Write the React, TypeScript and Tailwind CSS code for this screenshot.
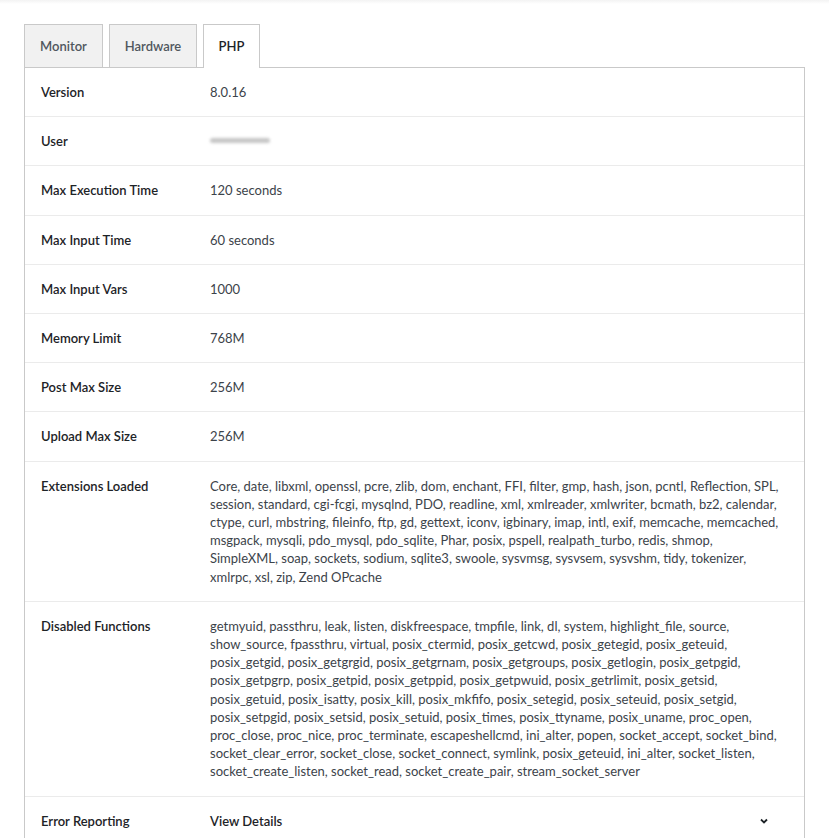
import React from "react";

const ext = [
  "Core, date, libxml, openssl, pcre, zlib, dom, enchant, FFI, filter, gmp, hash, json, pcntl, Reflection, SPL,",
  "session, standard, cgi-fcgi, mysqlnd, PDO, readline, xml, xmlreader, xmlwriter, bcmath, bz2, calendar,",
  "ctype, curl, mbstring, fileinfo, ftp, gd, gettext, iconv, igbinary, imap, intl, exif, memcache, memcached,",
  "msgpack, mysqli, pdo_mysql, pdo_sqlite, Phar, posix, pspell, realpath_turbo, redis, shmop,",
  "SimpleXML, soap, sockets, sodium, sqlite3, swoole, sysvmsg, sysvsem, sysvshm, tidy, tokenizer,",
  "xmlrpc, xsl, zip, Zend OPcache",
];

const dis = [
  "getmyuid, passthru, leak, listen, diskfreespace, tmpfile, link, dl, system, highlight_file, source,",
  "show_source, fpassthru, virtual, posix_ctermid, posix_getcwd, posix_getegid, posix_geteuid,",
  "posix_getgid, posix_getgrgid, posix_getgrnam, posix_getgroups, posix_getlogin, posix_getpgid,",
  "posix_getpgrp, posix_getpid, posix_getppid, posix_getpwuid, posix_getrlimit, posix_getsid,",
  "posix_getuid, posix_isatty, posix_kill, posix_mkfifo, posix_setegid, posix_seteuid, posix_setgid,",
  "posix_setpgid, posix_setsid, posix_setuid, posix_times, posix_ttyname, posix_uname, proc_open,",
  "proc_close, proc_nice, proc_terminate, escapeshellcmd, ini_alter, popen, socket_accept, socket_bind,",
  "socket_clear_error, socket_close, socket_connect, symlink, posix_geteuid, ini_alter, socket_listen,",
  "socket_create_listen, socket_read, socket_create_pair, stream_socket_server",
];

function Row({ label, children, last }: { label: string; children: React.ReactNode; last?: boolean }) {
  return (
    <div className={`grid grid-cols-[185px_1fr] ${last ? "" : "border-b border-[#ebebeb]"}`}>
      <div className="pl-4 py-[15px] font-semibold text-[#1d2327]">{label}</div>
      <div className="py-[15px] pr-4 text-[#3c434a]">{children}</div>
    </div>
  );
}

function Lines({ lines }: { lines: string[] }) {
  return (
    <div>
      {lines.map((l, i) => (
        <div key={i} className="whitespace-nowrap">{l}</div>
      ))}
    </div>
  );
}

export default function App() {
  return (
    <div
      className="relative w-[829px] h-[838px] overflow-hidden bg-white text-[13px] leading-[18.2px]"
      style={{ fontFamily: 'Lato, "Noto Sans", sans-serif' }}
    >
      <div className="absolute top-0 left-0 right-0 h-[4px] bg-gradient-to-b from-[#f3f3f3] to-white" />
      <div className="pt-[24px] pl-[24px] w-[805px]">
        <div className="flex items-end gap-[6px] h-[43px]">
          <div className="h-[43px] w-[79px] flex items-center justify-center bg-[#f1f1f1] border border-[#c9c9c9] border-b-0 font-semibold text-[#50575e]">
            Monitor
          </div>
          <div className="h-[43px] w-[88px] flex items-center justify-center bg-[#f1f1f1] border border-[#c9c9c9] border-b-0 font-semibold text-[#50575e]">
            Hardware
          </div>
          <div className="relative z-10 h-[44px] mb-[-1px] w-[57px] flex items-center justify-center bg-white border border-[#c9c9c9] border-b-0 font-semibold text-[#1d2327]">
            PHP
          </div>
        </div>
        <div className="border border-[#c9c9c9] border-b-0 bg-white">
          <Row label="Version">8.0.16</Row>
          <Row label="User">
            <div className="h-[18px] flex items-center">
              <div className="w-[60px] h-[5px] mt-[-2px] bg-[#b8b8b8] blur-[1.5px] rounded-sm opacity-80" />
            </div>
          </Row>
          <Row label="Max Execution Time">120 seconds</Row>
          <Row label="Max Input Time">60 seconds</Row>
          <Row label="Max Input Vars">1000</Row>
          <Row label="Memory Limit">768M</Row>
          <Row label="Post Max Size">256M</Row>
          <Row label="Upload Max Size">256M</Row>
          <Row label="Extensions Loaded">
            <Lines lines={ext} />
          </Row>
          <Row label="Disabled Functions">
            <Lines lines={dis} />
          </Row>
          <Row label="Error Reporting" last>
            <div className="flex items-center justify-between">
              <span className="font-semibold text-[#1d2327]">View Details</span>
              <svg width="10" height="10" viewBox="0 0 10 10" className="mr-[19px]">
                <path d="M2 3.5 L5 6.5 L8 3.5" fill="none" stroke="#1d2327" strokeWidth="1.8" />
              </svg>
            </div>
          </Row>
        </div>
      </div>
    </div>
  );
}
